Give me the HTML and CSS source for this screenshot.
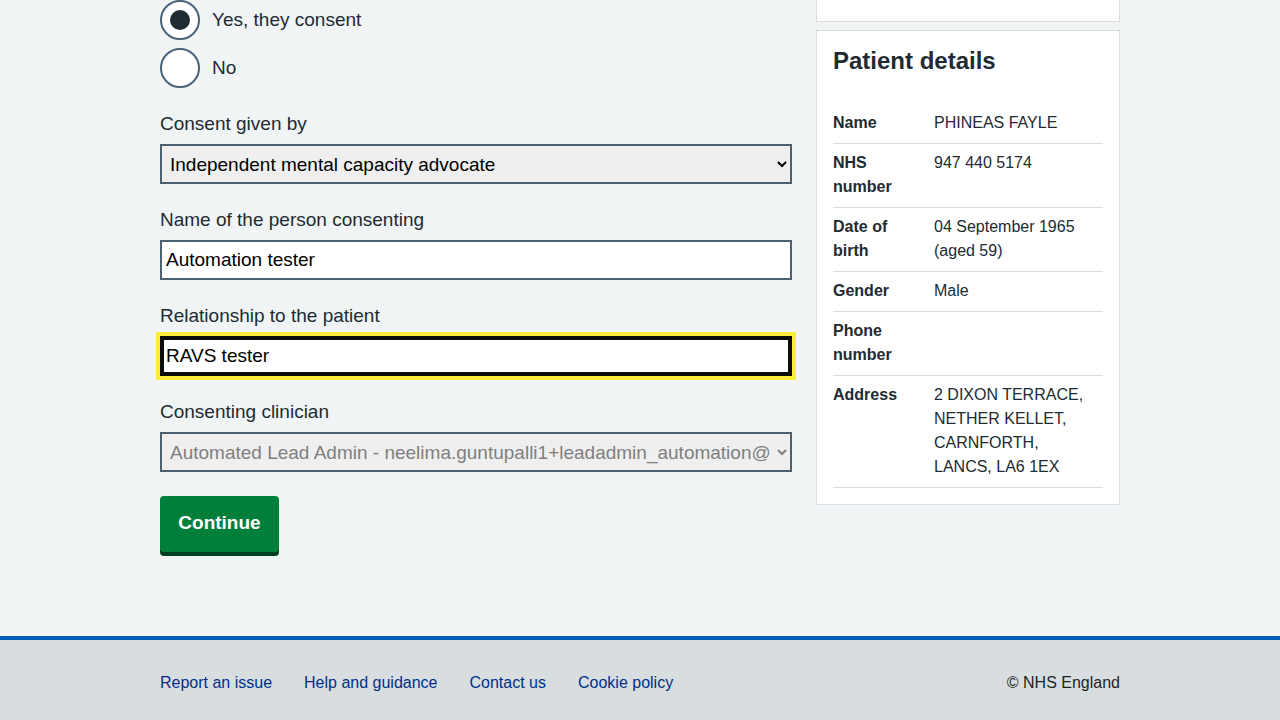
FILE: index.html
```html
<!DOCTYPE html>
<html lang="en">
<head>
<meta charset="utf-8">
<title>Consent</title>
<link rel="stylesheet" href="styles.css">
</head>
<body>
<main class="main">
  <div class="layout">
    <div class="col-form">
      <div class="radios form-group">
        <label class="radio">
          <input type="radio" name="consent" checked>
          <span class="radio-mark"></span>
          <span class="radio-label">Yes, they consent</span>
        </label>
        <label class="radio">
          <input type="radio" name="consent">
          <span class="radio-mark"></span>
          <span class="radio-label">No</span>
        </label>
      </div>
      <div class="form-group">
        <label class="label" for="given-by">Consent given by</label>
        <select class="select" id="given-by">
          <option>Independent mental capacity advocate</option>
        </select>
      </div>
      <div class="form-group">
        <label class="label" for="name">Name of the person consenting</label>
        <input class="input" id="name" type="text" value="Automation tester">
      </div>
      <div class="form-group">
        <label class="label" for="rel">Relationship to the patient</label>
        <input class="input input-focus" id="rel" type="text" value="RAVS tester">
      </div>
      <div class="form-group">
        <label class="label" for="clin">Consenting clinician</label>
        <select class="select select-muted" id="clin">
          <option>Automated Lead Admin - neelima.guntupalli1+leadadmin_automation@nhs.net</option>
        </select>
      </div>
      <button class="button" type="button">Continue</button>
    </div>
    <aside class="col-side">
      <div class="card card-cut"></div>
      <div class="card">
        <h2 class="card-heading">Patient details</h2>
        <dl class="summary">
          <div class="summary-row"><dt>Name</dt><dd>PHINEAS FAYLE</dd></div>
          <div class="summary-row"><dt>NHS number</dt><dd>947 440 5174</dd></div>
          <div class="summary-row"><dt>Date of birth</dt><dd>04 September 1965 (aged 59)</dd></div>
          <div class="summary-row"><dt>Gender</dt><dd>Male</dd></div>
          <div class="summary-row"><dt>Phone number</dt><dd></dd></div>
          <div class="summary-row"><dt>Address</dt><dd>2 DIXON TERRACE,<br>NETHER KELLET,<br>CARNFORTH,<br>LANCS, LA6 1EX</dd></div>
        </dl>
      </div>
    </aside>
  </div>
</main>
<footer class="footer">
  <div class="footer-inner">
    <ul class="footer-links">
      <li><a href="#">Report an issue</a></li>
      <li><a href="#">Help and guidance</a></li>
      <li><a href="#">Contact us</a></li>
      <li><a href="#">Cookie policy</a></li>
    </ul>
    <p class="copyright">© NHS England</p>
  </div>
</footer>
</body>
</html>
```
FILE: styles.css
```css
* { box-sizing: border-box; }
html, body { margin: 0; padding: 0; }
body {
  background: #f0f4f5;
  color: #212b32;
  font-family: "Liberation Sans", Arial, sans-serif;
  font-size: 19px;
  line-height: 28px;
}
.main { padding-bottom: 84px; }
.layout {
  width: 960px;
  margin: 0 auto;
  display: grid;
  grid-template-columns: 632px 304px;
  column-gap: 24px;
  align-items: start;
}
.form-group { margin-bottom: 24px; }
.radios { display: flex; flex-direction: column; gap: 8px; }
.radio { display: flex; align-items: center; gap: 12px; height: 40px; cursor: pointer; }
.radio input { position: absolute; opacity: 0; width: 0; height: 0; }
.radio-mark {
  width: 40px; height: 40px;
  border: 2px solid #4c6272;
  border-radius: 50%;
  background: #fff;
  display: flex; align-items: center; justify-content: center;
  flex: none;
}
.radio input:checked + .radio-mark::after {
  content: "";
  width: 20px; height: 20px;
  border-radius: 50%;
  background: #212b32;
}
.radio-label { font-size: 19px; }
.label { display: block; margin-bottom: 8px; font-size: 19px; line-height: 24px; }
.select, .input {
  display: block;
  width: 100%;
  height: 40px;
  border: 2px solid #4c6272;
  border-radius: 0;
  font-family: "Liberation Sans", Arial, sans-serif;
  font-size: 19px;
  color: #000;
}
.select { background: #efefef; padding: 0 4px 0 4px; }
.select-muted { color: #7f7f7f; }
.input { background: #fff; padding: 0 4px; }
.input-focus {
  border: 2px solid #0b0c0c;
  box-shadow: inset 0 0 0 2px #0b0c0c;
  outline: 4px solid #ffeb3b;
  outline-offset: 0;
}
.button {
  display: block;
  background: #007f3b;
  color: #fff;
  border: 0;
  border-radius: 4px;
  box-shadow: 0 4px 0 #00401e;
  font-family: "Liberation Sans", Arial, sans-serif;
  font-weight: 700;
  font-size: 19px;
  line-height: 24px;
  padding: 15px 18px 17px;
  height: 56px;
  width: 119px;
}
.card {
  background: #fff;
  border: 1px solid #d8dde0;
  padding: 16px;
}
.card-cut { height: 22px; border-top: 0; padding: 0; margin-bottom: 8px; }
.card-heading {
  margin: 0 0 29px;
  font-size: 24px;
  line-height: 28px;
  font-weight: 700;
}
.summary { margin: 0; font-size: 16px; line-height: 24px; }
.summary-row {
  display: grid;
  grid-template-columns: 101px 1fr;
  border-bottom: 1px solid #d8dde0;
  padding: 7px 0 8px;
}
.summary dt { font-weight: 700; padding-right: 16px; }
.summary dd { margin: 0; }
.footer {
  border-top: 4px solid #005eb8;
  background: #d8dde0;
  height: 120px;
}
.footer-inner {
  width: 960px;
  margin: 0 auto;
  display: flex;
  justify-content: space-between;
  padding-top: 31px;
  font-size: 16px;
  line-height: 24px;
}
.footer-links { list-style: none; margin: 0; padding: 0; display: flex; gap: 32px; }
.footer-links a { color: #003087; text-decoration: none; }
.copyright { margin: 0; color: #231f20; }
```
